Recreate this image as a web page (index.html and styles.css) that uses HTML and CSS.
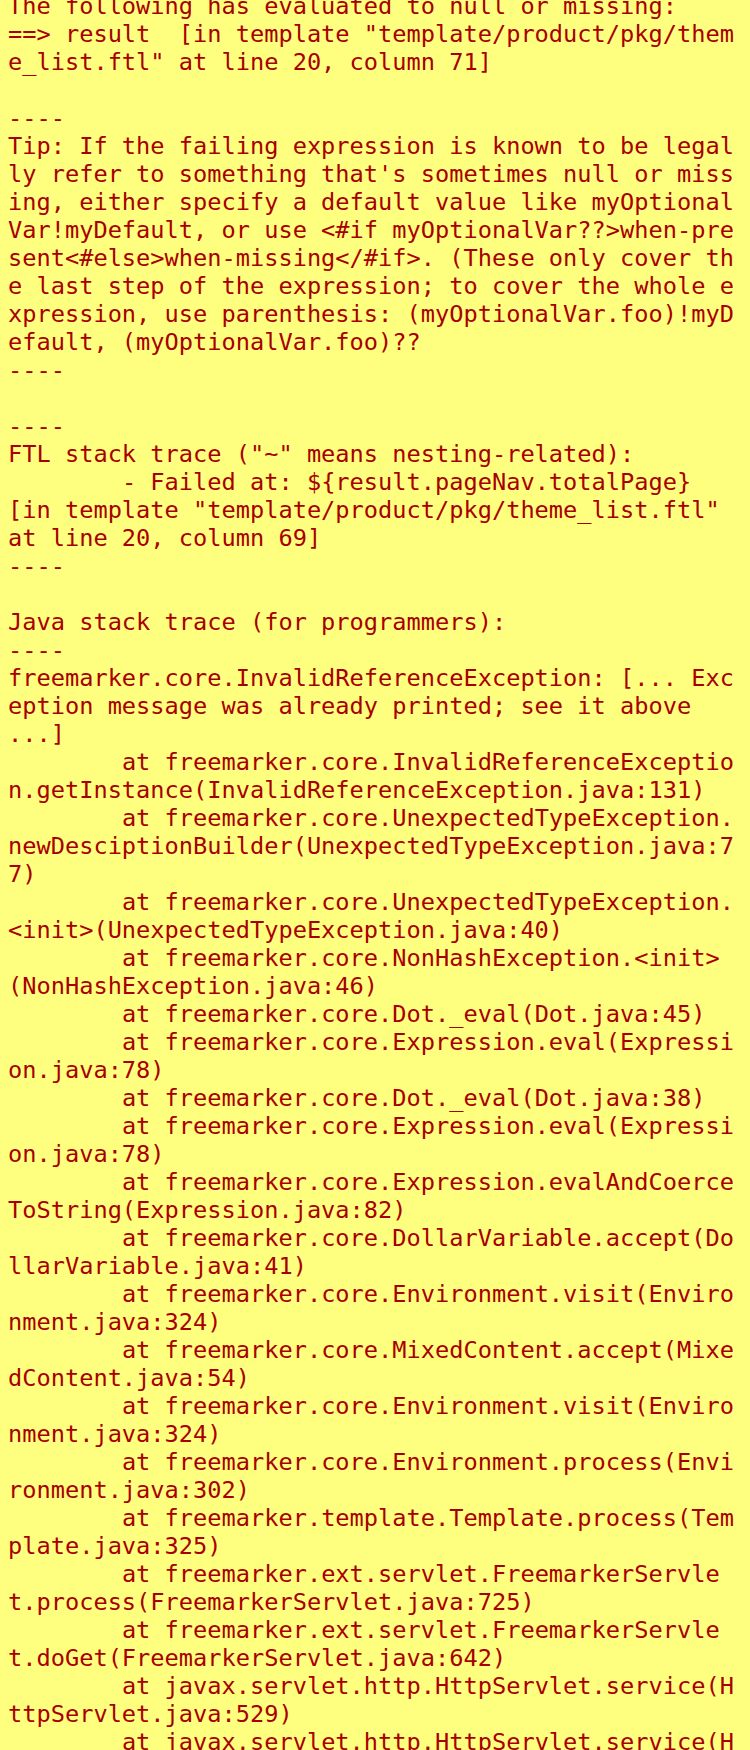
FILE: index.html
```html
<!DOCTYPE html>
<html>
<head>
<meta charset="utf-8">
<title>FreeMarker template error</title>
<link rel="stylesheet" href="styles.css">
</head>
<body>
<div class="error-box">
<pre class="error-text">The following has evaluated to null or missing:
==&gt; result  [in template "template/product/pkg/theme_list.ftl" at line 20, column 71]

----
Tip: If the failing expression is known to be legally refer to something that's sometimes null or missing, either specify a default value like myOptionalVar!myDefault, or use &lt;#if myOptionalVar??&gt;when-present&lt;#else&gt;when-missing&lt;/#if&gt;. (These only cover the last step of the expression; to cover the whole expression, use parenthesis: (myOptionalVar.foo)!myDefault, (myOptionalVar.foo)??
----

----
FTL stack trace ("~" means nesting-related):
	- Failed at: ${result.pageNav.totalPage}  [in template "template/product/pkg/theme_list.ftl" at line 20, column 69]
----

Java stack trace (for programmers):
----
freemarker.core.InvalidReferenceException: [... Exception message was already printed; see it above ...]
	at freemarker.core.InvalidReferenceException.getInstance(InvalidReferenceException.java:131)
	at freemarker.core.UnexpectedTypeException.newDesciptionBuilder(UnexpectedTypeException.java:77)
	at freemarker.core.UnexpectedTypeException.&lt;init&gt;(UnexpectedTypeException.java:40)
	at freemarker.core.NonHashException.&lt;init&gt;(NonHashException.java:46)
	at freemarker.core.Dot._eval(Dot.java:45)
	at freemarker.core.Expression.eval(Expression.java:78)
	at freemarker.core.Dot._eval(Dot.java:38)
	at freemarker.core.Expression.eval(Expression.java:78)
	at freemarker.core.Expression.evalAndCoerceToString(Expression.java:82)
	at freemarker.core.DollarVariable.accept(DollarVariable.java:41)
	at freemarker.core.Environment.visit(Environment.java:324)
	at freemarker.core.MixedContent.accept(MixedContent.java:54)
	at freemarker.core.Environment.visit(Environment.java:324)
	at freemarker.core.Environment.process(Environment.java:302)
	at freemarker.template.Template.process(Template.java:325)
	at freemarker.ext.servlet.FreemarkerServlet.process(FreemarkerServlet.java:725)
	at freemarker.ext.servlet.FreemarkerServlet.doGet(FreemarkerServlet.java:642)
	at javax.servlet.http.HttpServlet.service(HttpServlet.java:529)
	at javax.servlet.http.HttpServlet.service(HttpServlet.java:623)
	at org.apache.catalina.core.ApplicationFilterChain.internalDoFilter(ApplicationFilterChain.java:209)</pre>
</div>
</body>
</html>
```

FILE: styles.css
```css
html {
  background: #FFFF7F;
}

body {
  margin: 0;
  background: #FFFF7F;
  color: #A80000;
}

.error-box {
  padding: 0 8px;
  overflow: hidden;
}

.error-text {
  margin: -8px 0 0 0;
  padding: 0;
  font-family: "DejaVu Sans Mono", monospace;
  font-size: 23.65px;
  line-height: 28px;
  font-weight: normal;
  white-space: pre-wrap;
  word-break: break-all;
  tab-size: 8;
  text-align: left;
}
```
